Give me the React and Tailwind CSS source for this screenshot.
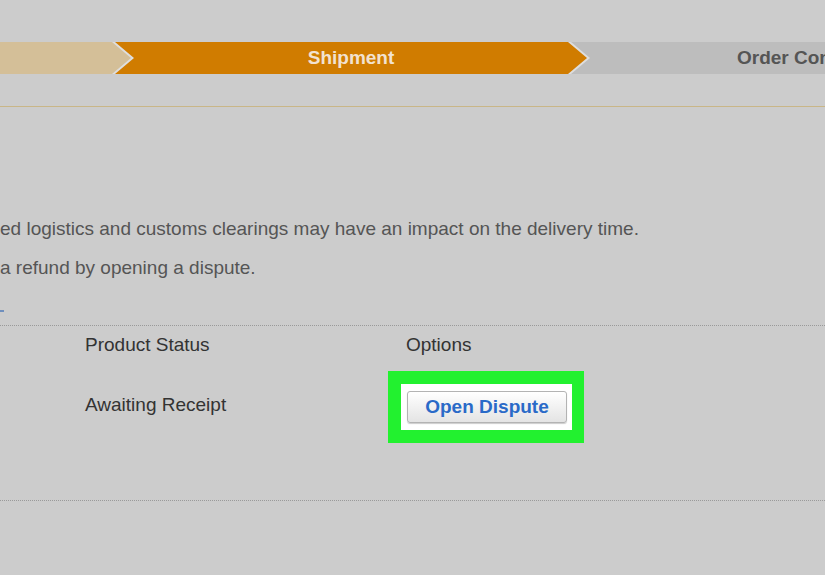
import React from 'react';

const Steps = () => (
  <div className="flex h-[32px] bg-[#dedede] overflow-hidden">
    <div className="w-[131px] shrink-0 bg-[#d4bf98] [clip-path:polygon(0_0,112px_0,131px_50%,112px_100%,0_100%)]" />
    <div className="w-[472px] shrink-0 -ml-[16px] bg-[#d07c00] flex items-center justify-center text-[19px] font-bold text-[#f2e2d0] [clip-path:polygon(0_0,453px_0,472px_50%,453px_100%,0_100%,19px_50%)]">
      Shipment
    </div>
    <div className="w-[500px] shrink-0 -ml-[16px] bg-[#bdbdbd] flex items-center pl-[166px] text-[19px] font-bold text-[#555555] whitespace-nowrap [clip-path:polygon(0_0,100%_0,100%_100%,0_100%,19px_50%)]">
      Order Confirmation
    </div>
  </div>
);

const App = () => {
  return (
    <div className="w-[825px] h-[575px] bg-[#cccccc] overflow-hidden font-['Liberation_Sans',Arial,sans-serif]">
      <div className="pt-[42px]">
        <Steps />
      </div>
      <div className="mt-[32px] border-t border-[#c9b687]" />

      <div className="mt-[102px] text-[19px] text-[#555555] whitespace-nowrap">
        <p className="h-[39px] leading-[39px]">ed logistics and customs clearings may have an impact on the delivery time.</p>
        <p className="h-[39px] leading-[39px]">a refund by opening a dispute.</p>
        <div className="h-[38px] pt-[23px]">
          <div className="w-[4px] h-[2px] bg-[#6f8fbd]" />
        </div>
      </div>

      <div className="border-t border-dotted border-[#9a9a9a] text-[19px] text-[#333333]">
        <div className="flex h-[38px] items-center">
          <div className="w-[75px] shrink-0" />
          <div className="w-[321px] shrink-0 pl-[10px]">Product Status</div>
          <div className="pl-[10px]">Options</div>
        </div>
        <div className="flex h-[137px] items-start border-b border-dotted border-[#9a9a9a]">
          <div className="w-[75px] shrink-0" />
          <div className="w-[321px] shrink-0 pl-[10px] pt-[30px] leading-[22px]">Awaiting Receipt</div>
          <div className="pt-[7px] -ml-[8px]">
            <div className="w-fit border-[#22f12f] border-t-[13px] border-b-[13px] border-l-[13px] border-r-[12px] bg-white pl-[6px] pr-[5px] py-[7px]">
              <button className="w-[160px] h-[32px] rounded-[3px] border border-[#b3b3b3] bg-linear-to-b from-white to-[#e4e4e4] shadow-[0_1px_1px_rgba(0,0,0,0.2)] text-[19px] font-bold text-[#2a6ac8] flex items-center justify-center">
                Open Dispute
              </button>
            </div>
          </div>
        </div>
      </div>
    </div>
  );
};

export default App;
